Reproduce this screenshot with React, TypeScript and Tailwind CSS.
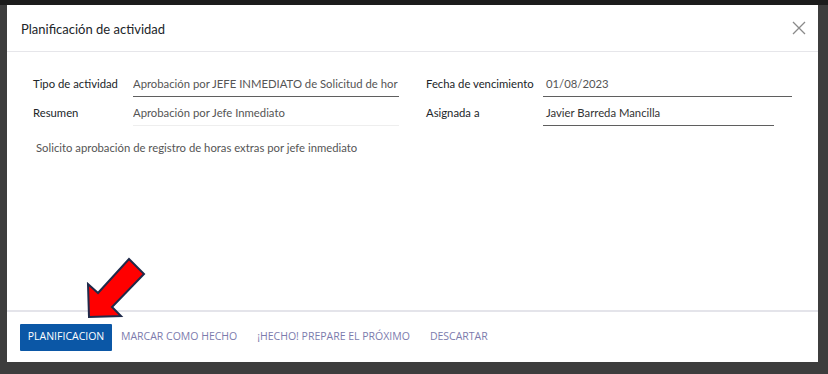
const label = 'text-[11.3px] text-[#212529] pb-[4px] whitespace-nowrap'
const value = 'text-[11.3px] pb-[3px] whitespace-nowrap overflow-hidden'
const btn = 'h-[27px] px-[9px] text-[10.5px] text-[#7c7bad]'

export default function App() {
  return (
    <div className="relative w-[828px] h-[374px] bg-[#3d3d3d] overflow-hidden" style={{ fontFamily: 'Lato, "Open Sans", sans-serif' }}>
      <div className="absolute left-0 top-0 w-[828px] h-[5px] bg-[#1c1c1c]" />
      <div className="ml-[7px] pt-[5px]">
        <div className="w-[811px] h-[357px] bg-white flex flex-col">
          <div className="h-[47px] flex items-center justify-between pt-[4px] pl-[14px] pr-[12px] border-b border-[#e6e6ea]">
            <h4 className="text-[13px] text-[#212529]">Planificación de actividad</h4>
            <svg width="14" height="14" viewBox="0 0 14 14" className="text-[#8a8a8a] -mt-[4px]">
              <path d="M1 1 L13 13 M13 1 L1 13" stroke="currentColor" strokeWidth="1.3" />
            </svg>
          </div>
          <div className="flex-1 pl-[26px] pt-[24px]">
            <div className="flex">
              <div className="w-[393px]">
                <div className="flex items-end h-[21px]">
                  <div className={`w-[100px] ${label}`}>Tipo de actividad</div>
                  <div className={`w-[266px] border-b border-[#5f5f5f] text-[#555] ${value}`}>Aprobación por JEFE INMEDIATO de Solicitud de hor</div>
                </div>
                <div className="flex items-end h-[29px]">
                  <div className={`w-[100px] ${label}`}>Resumen</div>
                  <div className={`w-[266px] border-b border-[#eeeeee] text-[#555] ${value}`}>Aprobación por Jefe Inmediato</div>
                </div>
              </div>
              <div>
                <div className="flex items-end h-[21px]">
                  <div className={`w-[117px] ${label}`}>Fecha de vencimiento</div>
                  <div className={`w-[249px] border-b border-[#5f5f5f] text-[#555] pl-[3px] ${value}`}>01/08/2023</div>
                </div>
                <div className="flex items-end h-[29px]">
                  <div className={`w-[117px] ${label}`}>Asignada a</div>
                  <div className={`w-[231px] border-b border-[#5f5f5f] text-[#333] pl-[3px] ${value}`}>Javier Barreda Mancilla</div>
                </div>
              </div>
            </div>
            <p className="mt-[14px] pl-[3px] text-[11.3px] text-[#555]">Solicito aprobación de registro de horas extras por jefe inmediato</p>
          </div>
          <div className="h-[52px] border-t-2 border-[#e4e4ea] flex items-center pl-[13px] gap-[2px]" style={{ fontFamily: '"Open Sans", Lato, sans-serif' }}>
            <button className="h-[27px] w-[92px] bg-[#0b57a6] text-white text-[10.5px] rounded-[1px] -mr-[2px]">PLANIFICACION</button>
            <button className={btn}>MARCAR COMO HECHO</button>
            <button className={btn}>¡HECHO! PREPARE EL PRÓXIMO</button>
            <button className={btn}>DESCARTAR</button>
          </div>
        </div>
      </div>
      <svg className="absolute left-0 top-0" width="828" height="374" viewBox="0 0 828 374">
        <polygon points="89,317 88,284 98,293 129,259 144,274 112,307 121,316" fill="#ff0000" stroke="#1f2a4a" strokeWidth="2" strokeLinejoin="miter" />
      </svg>
    </div>
  )
}
